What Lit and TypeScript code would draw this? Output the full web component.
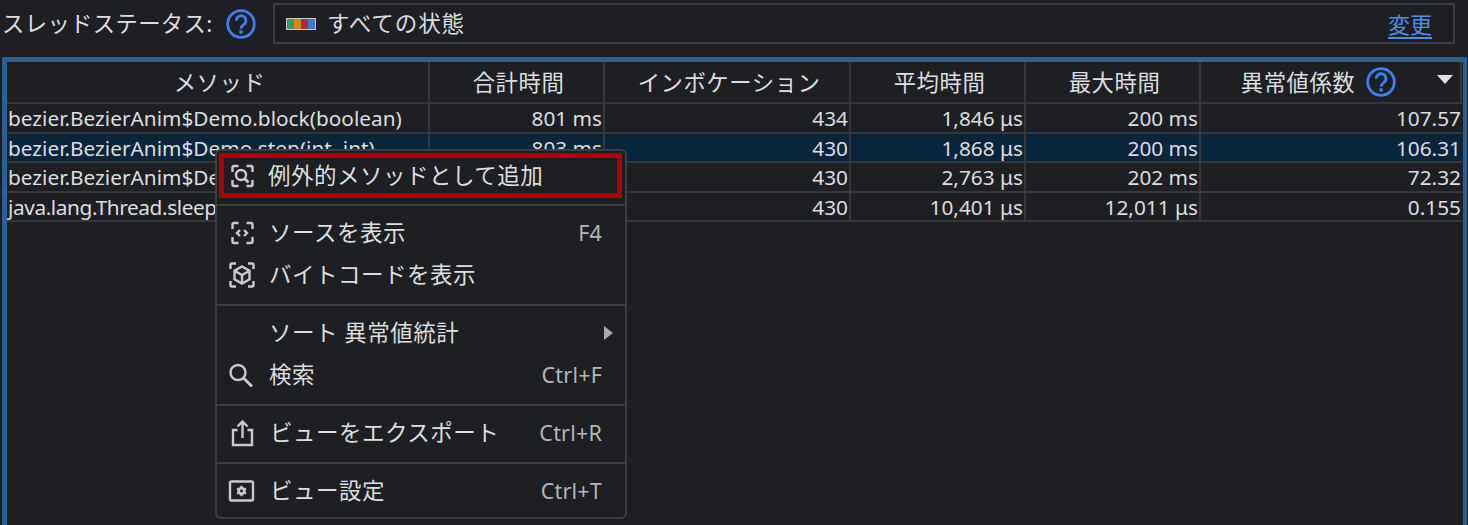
import { LitElement, html, css, svg } from "lit";
import { customElement } from "lit/decorators.js";

const ico = (body: unknown, size = 28) => html`<svg class="ic" width=${size} height=${size} viewBox="0 0 28 28" fill="none" stroke="#c8cacc" stroke-width="2.400">${body}</svg>`;
const corners = svg`<path d="M4 10V5.500A1.500 1.500 0 0 1 5.500 4H10M18 4h4.500A1.500 1.500 0 0 1 24 5.500V10M24 18v4.500a1.500 1.500 0 0 1-1.500 1.500H18M10 24H5.500A1.500 1.500 0 0 1 4 22.500V18" transform="translate(1.500 0)"/>`;
const cornersWide = svg`<path d="M2.500 8V4A1.500 1.500 0 0 1 4 2.500H8M20 2.500h4A1.500 1.500 0 0 1 25.500 4V8M25.500 20v4a1.500 1.500 0 0 1-1.500 1.500H20M8 25.500H4A1.500 1.500 0 0 1 2.500 24V20" transform="translate(1 0)"/>`;
const help = (size = 30) => html`<svg class="help" width=${size} height=${size} viewBox="0 0 30 30" fill="none"><circle cx="15" cy="15" r="13.300" stroke="#3b82f0" stroke-width="2.800"/><path d="M10.300 11.800a4.800 4.800 0 1 1 7.700 3.600c-1.900 1.400-3 2.200-3 4.300" stroke="#3b82f0" stroke-width="2.800"/><circle cx="15" cy="23" r="1.900" fill="#3b82f0"/></svg>`;

const rows = [
  ["bezier.BezierAnim$Demo.block(boolean)", "801 ms", "434", "1,846 μs", "200 ms", "107.57"],
  ["bezier.BezierAnim$Demo.step(int, int)", "803 ms", "430", "1,868 μs", "200 ms", "106.31"],
  ["bezier.BezierAnim$Demo.paint(Graphics)", "1,188 ms", "430", "2,763 μs", "202 ms", "72.32"],
  ["java.lang.Thread.sleep(long)", "4,472 ms", "430", "10,401 μs", "12,011 μs", "0.155"],
];

@customElement("app-root")
export class AppRoot extends LitElement {
  static styles = css`
    :host { display: block; width: 1468px; height: 525px; position: relative; overflow: hidden; background: #1e1f22; color: #dcdee0;
      font-family: "Noto Sans", "Noto Sans CJK JP", sans-serif; font-size: 21px; line-height: 28px; }
    * { box-sizing: border-box; }
    svg { display: block; flex: none; }
    .top { display: flex; align-items: center; height: 57px; padding: 3px 13px 13px 2px; }
    .lbl { font-size: 22.400px; letter-spacing: 0.300px; width: 224px; white-space: nowrap; }
    .top .help { margin-right: 17px; }
    .field { flex: 1; height: 41px; border: 2px solid #3c3e41; display: flex; align-items: center; padding: 0 21px 0 11px; }
    .swatch { display: flex; width: 30px; height: 12px; border: 1px solid #c8cacc; margin-right: 11px; }
    .swatch i { flex: 1; }
    .val { flex: 1; font-size: 22.500px; letter-spacing: 0.900px; }
    .link { color: #4a90f0; text-decoration: underline; text-underline-offset: 4px; font-size: 22px; }
    .table { margin: 0 0 0 2px; width: 1465px; height: 468px; border: 4px solid #2a6094; border-top-width: 5px; border-left-width: 5px; border-bottom: 0; }
    .grid { display: grid; grid-template-columns: 423px 175px 246px 175px 175px 261px; }
    .c { border-right: 2px solid #35373a; border-bottom: 2px solid #35373a; white-space: nowrap; overflow: hidden; }
    .h { height: 42px; display: flex; align-items: center; justify-content: center; font-size: 22.400px; letter-spacing: 0.500px; position: relative; gap: 11px; padding: 2px 0 0 4px; }
    .h.last { padding: 0 28px 0 4px; }
    .h.last span.tx { padding-top: 2px; }
    .d { height: 29.500px; line-height: 28px; padding: 0 1px; text-align: right; font-size: 20.800px; color: #dcdee0; }
    .d.l { text-align: left; }
    .d.j { letter-spacing: -0.400px; }
    .d.e { border-right: 0; }
    .sel { background: #07263b; }
    .sort { position: absolute; right: 7px; top: 13px; width: 0; height: 0; border-left: 8px solid transparent; border-right: 8px solid transparent; border-top: 9px solid #dfe1e3; }
    .menu { position: absolute; left: 215px; top: 149px; width: 412px; height: 370px; background: #1e1f22; border: 2px solid #3c3e41; border-radius: 6px; display: flex; flex-direction: column; z-index: 2; }
    .it { display: flex; align-items: center; height: 42px; padding: 0 23px 2px 10px; font-size: 22.500px; letter-spacing: 0.500px; }
    .it .ic { margin-right: 14px; }
    .it .nic { width: 42px; flex: none; }
    .it .t { flex: 1; white-space: nowrap; }
    .k { color: #b4b6b9; font-size: 21.500px; letter-spacing: 0.200px; }
    .sep { height: 2px; background: #3c3e41; flex: none; }
    .gap { height: 7px; flex: none; }
    .gap.s { height: 6px; }
    .hot { height: 45px; margin: 2px 3px 0 2px; border: 5px solid #ad0000; padding: 0 0 0 3px; flex: none; }
    .hot .ic { margin-right: 13px; }
    .arrow { width: 0; height: 0; border-top: 7.500px solid transparent; border-bottom: 7.500px solid transparent; border-left: 9px solid #a8aaad; margin-right: -11px; }
    .ms { margin-left: 1px; }
  `;

  render() {
    return html`
      <div class="top">
        <span class="lbl">スレッドステータス:</span>${help()}
        <div class="field">
          <span class="swatch"><i style="background:#2e9e5b"></i><i style="background:#d18a0c"></i><i style="background:#b52a2a"></i><i style="background:#3a78d8"></i></span>
          <span class="val">すべての状態</span>
          <span class="link">変更</span>
        </div>
      </div>
      <div class="table">
        <div class="grid">
          <div class="c h">メソッド</div><div class="c h">合計時間</div><div class="c h">インボケーション</div>
          <div class="c h">平均時間</div><div class="c h">最大時間</div>
          <div class="c h last"><span class="tx">異常値係数</span>${help()}<span class="sort"></span></div>
          ${rows.map((r, i) => r.map((v, j) => html`<div class="c d ${j === 0 ? "l" : ""} ${j === 5 ? "e" : ""} ${j === 0 && i === 3 ? "j" : ""} ${i === 1 ? "sel" : ""}">${v}</div>`))}
        </div>
      </div>
      <div class="menu">
        <div class="it hot">${ico(svg`${corners}<circle cx="14" cy="13" r="5"/><path d="M17.500 16.500 21.500 20.500" stroke-width="3"/>`)}<span class="t">例外的メソッドとして追加</span></div>
        <div class="gap s"></div>
        <div class="sep"></div>
        <div class="gap"></div>
        <div class="it">${ico(svg`${corners}<path d="M13 11l-3 3 3 3M17 11l3 3-3 3"/>`)}<span class="t">ソースを表示</span><span class="k">F4</span></div>
        <div class="it">${ico(svg`${cornersWide}<path d="M15 5.500l7.500 4.200v8.600L15 22.500l-7.500-4.200V9.700zM7.500 9.700 15 14l7.500-4.300M15 14v8.500"/>`)}<span class="t">バイトコードを表示</span></div>
        <div class="gap"></div>
        <div class="sep"></div>
        <div class="gap"></div>
        <div class="it"><span class="nic"></span><span class="t">ソート 異常値統計</span><span class="arrow"></span></div>
        <div class="it">${ico(svg`<circle cx="11" cy="11.500" r="7.500"/><path d="M16.500 17l8.500 8.500" stroke-width="2.800"/>`)}<span class="t">検索</span><span class="k">Ctrl+F</span></div>
        <div class="gap"></div>
        <div class="sep"></div>
        <div class="gap"></div>
        <div class="it">${ico(svg`<path d="M10.500 11H6v15h19V11h-4.500M15.500 19V2.500M10.500 7.500l5-5 5 5"/>`)}<span class="t ms">ビューをエクスポート</span><span class="k">Ctrl+R</span></div>
        <div class="gap"></div>
        <div class="sep"></div>
        <div class="gap"></div>
        <div class="it">${ico(svg`<rect x="3" y="4.500" width="23" height="19" rx="1.500"/><circle cx="14.500" cy="14" r="2.800" stroke-width="2.800"/><path d="M14.500 8.800v1.600M14.500 17.600v1.600M10 11.400l1.400.8M17.600 15.800l1.400.8M10 16.600l1.400-.8M17.600 12.200l1.400-.8" stroke-width="2.200"/>`)}<span class="t ms">ビュー設定</span><span class="k">Ctrl+T</span></div>
      </div>
    `;
  }
}
